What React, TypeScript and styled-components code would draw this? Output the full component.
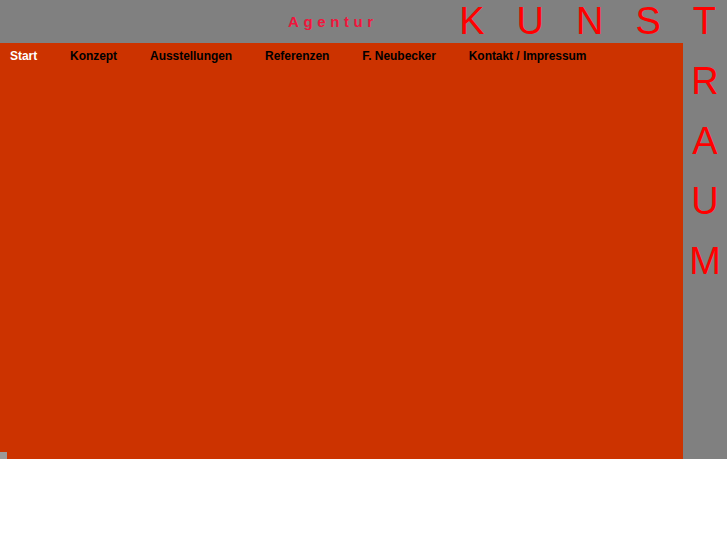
import React from "react";
import styled, { createGlobalStyle } from "styled-components";

const GlobalStyle = createGlobalStyle`
  html, body {
    margin: 0;
    padding: 0;
    background: #fff;
    font-family: "Liberation Sans", Arial, sans-serif;
  }
`;

const StyledPage = styled.div`
  width: 727px;
  display: flex;
  flex-direction: column;
`;

const StyledHeader = styled.header`
  height: 43px;
  background: #808080;
  display: flex;
  align-items: flex-start;
  overflow: hidden;
`;

const StyledAgentur = styled.span`
  margin-left: 288px;
  font-size: 15px;
  line-height: 43px;
  font-weight: 700;
  letter-spacing: 4.6px;
  color: #f0143c;
`;

const StyledKunst = styled.div`
  margin-left: auto;
  padding-right: 11px;
  display: flex;
  gap: 32px;
`;

const StyledBigLetter = styled.span`
  font-size: 38px;
  line-height: 43px;
  color: #ff0000;
`;

const StyledBody = styled.div`
  display: flex;
  height: 416px;
`;

const StyledMain = styled.main`
  position: relative;
  flex: 1;
  background: #cc3300;
`;

const StyledNav = styled.nav`
  display: flex;
  gap: 33px;
  padding: 6px 0 0 10px;
`;

const StyledNavLink = styled.a<{ $active?: boolean }>`
  font-size: 12px;
  line-height: 14px;
  font-weight: 700;
  letter-spacing: -0.05px;
  color: ${p => (p.$active ? "#fff" : "#000")};
  text-decoration: none;
  cursor: pointer;
`;

const StyledCorner = styled.div`
  position: absolute;
  left: 0;
  bottom: 0;
  width: 7px;
  height: 7px;
  background: #9a9a9a;
`;

const StyledAside = styled.aside`
  width: 44px;
  background: #808080;
  display: flex;
  flex-direction: column;
  align-items: center;
  padding-top: 8px;
  box-sizing: border-box;
`;

const StyledRaumLetter = styled.span`
  font-size: 38px;
  line-height: 60px;
  color: #ff0000;
`;

const navItems = [
  "Start",
  "Konzept",
  "Ausstellungen",
  "Referenzen",
  "F. Neubecker",
  "Kontakt / Impressum"
];

export default function App() {
  return (
    <>
      <GlobalStyle />
      <StyledPage>
        <StyledHeader>
          <StyledAgentur>Agentur</StyledAgentur>
          <StyledKunst>
            {"KUNST".split("").map((l, i) => (
              <StyledBigLetter key={i}>{l}</StyledBigLetter>
            ))}
          </StyledKunst>
        </StyledHeader>

        <StyledBody>
          <StyledMain>
            <StyledNav>
              {navItems.map((item, i) => (
                <StyledNavLink key={item} $active={i === 0}>
                  {item}
                </StyledNavLink>
              ))}
            </StyledNav>
            <StyledCorner />
          </StyledMain>

          <StyledAside>
            {"RAUM".split("").map((l, i) => (
              <StyledRaumLetter key={i}>{l}</StyledRaumLetter>
            ))}
          </StyledAside>
        </StyledBody>
      </StyledPage>
    </>
  );
}
